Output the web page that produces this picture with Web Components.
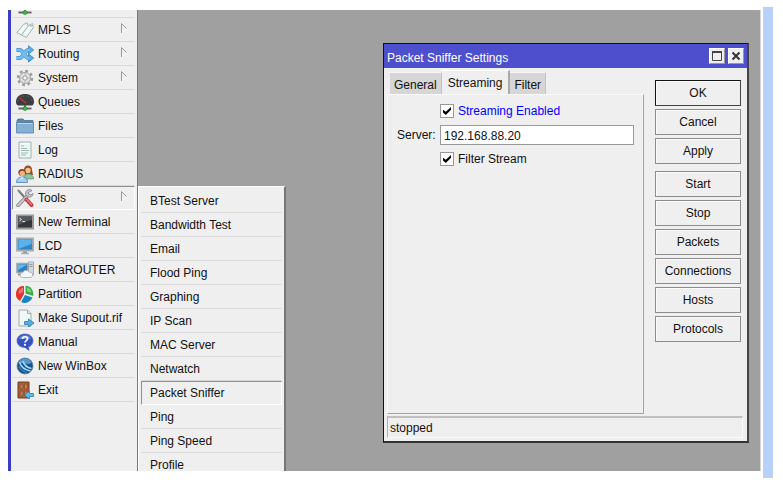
<!DOCTYPE html>
<html lang="en">
<head>
<meta charset="utf-8">
<meta name="viewport" content="width=device-width, initial-scale=1">
<title>WinBox</title>
<style>
  body {
    margin: 0;
    background: #fff;
    color: #111;
    font: 12px/16px "Liberation Sans", Arial, sans-serif;
  }
</style>
</head>
<body>
<wb-page>
  <wb-sidebar>
    <wb-item icon="queues"></wb-item>
    <wb-item icon="mpls" arrow>MPLS</wb-item>
    <wb-item icon="routing" arrow>Routing</wb-item>
    <wb-item icon="system" arrow>System</wb-item>
    <wb-item icon="queues">Queues</wb-item>
    <wb-item icon="files">Files</wb-item>
    <wb-item icon="log">Log</wb-item>
    <wb-item icon="radius">RADIUS</wb-item>
    <wb-item icon="tools" arrow selected>Tools
      <wb-submenu slot="submenu">
        <wb-item>BTest Server</wb-item>
        <wb-item>Bandwidth Test</wb-item>
        <wb-item>Email</wb-item>
        <wb-item>Flood Ping</wb-item>
        <wb-item>Graphing</wb-item>
        <wb-item>IP Scan</wb-item>
        <wb-item>MAC Server</wb-item>
        <wb-item>Netwatch</wb-item>
        <wb-item selected>Packet Sniffer</wb-item>
        <wb-item>Ping</wb-item>
        <wb-item>Ping Speed</wb-item>
        <wb-item>Profile</wb-item>
      </wb-submenu>
    </wb-item>
    <wb-item icon="terminal">New Terminal</wb-item>
    <wb-item icon="lcd">LCD</wb-item>
    <wb-item icon="metarouter">MetaROUTER</wb-item>
    <wb-item icon="partition">Partition</wb-item>
    <wb-item icon="supout">Make Supout.rif</wb-item>
    <wb-item icon="manual">Manual</wb-item>
    <wb-item icon="winbox">New WinBox</wb-item>
    <wb-item icon="exit">Exit</wb-item>
  </wb-sidebar>

  <wb-window slot="window" heading="Packet Sniffer Settings" status="stopped">
    <wb-tabs tabs="General,Streaming,Filter" active="Streaming">
      <sniffer-form></sniffer-form>
    </wb-tabs>
    <wb-button slot="actions" primary>OK</wb-button>
    <wb-button slot="actions">Cancel</wb-button>
    <wb-button slot="actions">Apply</wb-button>
    <wb-button slot="actions" group>Start</wb-button>
    <wb-button slot="actions">Stop</wb-button>
    <wb-button slot="actions">Packets</wb-button>
    <wb-button slot="actions">Connections</wb-button>
    <wb-button slot="actions">Hosts</wb-button>
    <wb-button slot="actions">Protocols</wb-button>
  </wb-window>
</wb-page>

<script>
// Sidebar icons, all on an 18x18 grid
const ICONS = {
  mpls: `
    <g fill="#f1f8f6" stroke="#9db5b3" stroke-linejoin="round">
      <path d="M.8 11.500 7.500 3.500l3.700-1.700 1 3.700-6.700 8.500z"/>
      <path d="M5.500 14 12.500 4.500l4-2 .7 4L10.500 16.500z"/>
      <circle cx="14.800" cy="5" r=".6"/>
    </g>`,
  routing: `
    <g fill="none" stroke="#3f8fd0" stroke-width="4">
      <path d="M.5 5h3c4 0 5 8 9 8h1"/><path d="M.5 13h3c4 0 5-8 9-8h1"/>
    </g>
    <path d="M12.500.8 17.700 5l-5.200 4zM12.500 9l5.200 4-5.200 4z" fill="#5badea" stroke="#3f8fd0"/>
    <g fill="none" stroke="#74bff2" stroke-width="2.500">
      <path d="M.5 5h3c4 0 5 8 9 8h1"/><path d="M.5 13h3c4 0 5-8 9-8h1"/>
    </g>`,
  system: `
    <circle cx="9" cy="9" r="7" fill="none" stroke="#9a9a9a" stroke-width="2.400" stroke-dasharray="2.750 2.750"/>
    <circle cx="9" cy="9" r="5.500" fill="#e2e2e2" stroke="#a2a2a2"/>
    <circle cx="9" cy="9" r="2.200" fill="#f3f3f3" stroke="#969696"/>
    <path d="M9 4v2M9 12v2M4 9h2M12 9h2" stroke="#b8b8b8"/>`,
  queues: `
    <path d="M0 9C0 3.500 4 1 9 1s9 2.500 9 8c0 1.500-.8 3-2 3.500H2C.8 12 0 10.500 0 9z" fill="#3b3d40"/>
    <path d="M2 8c.5-3.500 3.500-5 7-5s6.500 1.500 7 5" fill="none" stroke="#707377" stroke-dasharray="1 1.500"/>
    <path d="m4 5 6 5" stroke="#b93834" stroke-width="1.500"/>
    <path d="M9 12v3M2.500 15.500h13" stroke="#666" stroke-width="2"/>
    <circle cx="9" cy="15.500" r="2" fill="#31c53c" stroke="#177f22" stroke-width=".6"/>`,
  files: `
    <path d="M1 3.500 2 2h5l1.500 1.500H17V9H1z" fill="#5d88ac" stroke="#4a7295" stroke-width=".8"/>
    <path d="M.5 5.500h17V16H.5z" fill="#85b0d3" stroke="#5480a4" stroke-width=".8"/>
    <path d="M1.500 6.500h15" stroke="#b5d3ea"/>`,
  log: `
    <path d="M3 1h12v16H3z" fill="#edf5f3" stroke="#9ab3b1"/>
    <path d="M5 5h3M5 7.500h6M5 9.500h8M5 12h7M5 14h5" stroke="#9dbdbc"/>
    <path d="M4 2.500h10" stroke="#fff"/>`,
  radius: `
    <path d="M8 10V5c0-3 1.500-4.500 4-4.500S16 2 16 5l1 5z" fill="#944e22"/>
    <circle cx="12" cy="5.500" r="2.700" fill="#f2c08c"/>
    <path d="M7.500 14c0-4 2-5 4.500-5s5.500 1 5.500 5z" fill="#8cc4a4" stroke="#5f9a7a" stroke-width=".7"/>
    <circle cx="6" cy="7.500" r="3.600" fill="#8c3c22"/>
    <circle cx="6.300" cy="8.500" r="2.700" fill="#f0b47c"/>
    <path d="M.5 17.500c0-4 2.500-5.500 5.500-5.500s5.500 1.500 5.500 5.500z" fill="#a5cdf5" stroke="#4980bd" stroke-width=".8"/>
    <path d="m4.500 12.500 1.500 2 1.500-2z" fill="#fff"/>`,
  tools: `
    <path d="m2 1 8 9" stroke="#777" stroke-width="2"/>
    <path d="m1 .5 3 1 1.500 3z" fill="#999"/>
    <path d="M2 16.500 12 6" stroke="#7b7d80" stroke-width="3.500" stroke-linecap="round"/>
    <path d="M2 16.500 12 6" stroke="#c9cbcd" stroke-width="2" stroke-linecap="round"/>
    <path d="M16 1.500a3.800 3.800 0 1 0 1.200 3L14 6l-2.200-2z" fill="#c6c8ca" stroke="#808386" stroke-width=".8"/>
    <path d="m10.500 10.500 5 5.500" stroke="#c23a3a" stroke-width="4" stroke-linecap="round"/>
    <path d="m10.500 10 5 5.500" stroke="#f07b78" stroke-width="1.500" stroke-linecap="round"/>`,
  terminal: `
    <path d="M1 2.500h16v13H1z" fill="#343639" stroke="#98999b" stroke-width="2"/>
    <path d="M2 3.500h14v3L2 12z" fill="#55585c"/>
    <path d="m3.500 5 2 1.500-2 1.500M6.500 8.500H9" fill="none" stroke="#e8e8e8"/>`,
  lcd: `
    <path d="M1 1.500h16v12H1z" fill="#2e86c6" stroke="#a5abb0" stroke-width="1.800"/>
    <path d="M2.500 3h13v4l-13 5z" fill="#5cb1e8"/>
    <path d="M7 14.500h4v2H7z" fill="#8d9296"/><path d="M5 16.500h8" stroke="#a9adb0" stroke-width="1.500"/>`,
  metarouter: `
    <path d="M1 2.500h11v9H1z" fill="#2f80c0" stroke="#a0a6ab" stroke-width="1.600"/>
    <path d="M2 3.500h9L2 9z" fill="#69b7e9"/>
    <path d="M12.500 1h5v13h-5z" fill="#d5d8da" stroke="#989da1" stroke-width=".8"/>
    <path d="M13.500 3.500h3M13.500 5.500h3" stroke="#909599"/>
    <path d="M2 13.500h4" stroke="#898f93" stroke-width="2"/>
    <path d="M6.500 16.500a2.500 2.500 0 0 1 .3-5 3.500 3.500 0 0 1 6.500-.3 2.800 2.800 0 0 1 1.700 5.300z" fill="#f5f8fa" stroke="#9ba9b4" stroke-width=".8"/>`,
  partition: `
    <path d="M8 1A8 8 0 0 0 4 16l4-7z" fill="#e1352f"/>
    <path d="M9.500.8A8 8 0 0 1 17 11L9.500 8.500z" fill="#3dad4a"/>
    <path d="M9 10 16.500 12.500A8 8 0 0 1 5.200 17z" fill="#1784c5"/>
    <path d="M7 2.500A6.500 6.500 0 0 0 2.500 9L7 7z" fill="#f2736c"/>
    <path d="M11 2.500a6 6 0 0 1 4.500 5L11 6.500z" fill="#7cd277"/>`,
  supout: `
    <path d="M3 1h8.500L15 4.500V17H3z" fill="#f0f7f5" stroke="#98afad"/>
    <path d="M11.500 1v3.500H15" fill="#d9e5e3" stroke="#98afad"/>
    <path d="M8.500 12.500h4V10l5.500 4-5.500 4v-2.500h-4z" fill="#4eafe4" stroke="#287eb0" stroke-width=".8"/>`,
  manual: `
    <path d="M9 1c4.500 0 8 2.800 8 6.800 0 3-1.800 5.200-4.500 6.200l.5 3.500-4-3C4.500 14.500 1 12 1 7.800S4.500 1 9 1z" fill="#3552c2" stroke="#5269b9" stroke-width=".7"/>
    <path d="M3 6c1-2.500 3-3.700 6-3.700S14 3.500 15 6z" fill="#6d8ae3"/>
    <path d="M6.500 6c.2-3 5-3 5 0 0 1.700-2.500 1.600-2.500 3.500" fill="none" stroke="#fff" stroke-width="1.700"/>
    <circle cx="9" cy="11.800" r="1.100" fill="#fff"/>`,
  winbox: `
    <circle cx="9" cy="9" r="8" fill="#17548d" stroke="#6d8799" stroke-width=".8"/>
    <path d="M2.500 6a7 7 0 0 1 13 0L13 7z" fill="#5798cc"/>
    <path d="M3.500 5c1.500 5 5 8 11 9M7 4c1 4 3.500 6.500 8.500 7.500" fill="none" stroke="#a9d7f4" stroke-width="1.500"/>
    <path d="M3 9c1.500 3.500 4 5.500 7.500 6.500" fill="none" stroke="#3e88c2" stroke-width="1.200"/>`,
  exit: `
    <path d="M2 1h11v16H2z" fill="#a9623b" stroke="#71391d"/>
    <path d="M4 3h3v5H4zM8.500 3h3v5h-3zM4 10h3v5H4zM8.500 10h3v5h-3z" fill="#bd7850" stroke="#8a4c2a" stroke-width=".7"/>
    <path d="M17.500 12.500h-4V10L8.500 14l5 4v-2.500h4z" fill="#61bbeb" stroke="#287eb0" stroke-width=".8"/>`
};

/** White page holding the desktop and the scroll strip beside it */
class WbPage extends HTMLElement {
  constructor() {
    super();
    this.attachShadow({ mode: 'open' }).innerHTML = `
      <style>
        :host {
          display: flex;
          gap: 2px;
          box-sizing: border-box;
          height: 100vh;
          padding: 7px 10px 13px 8px;
        }
        .desktop {
          position: relative;
          flex: 1;
          display: flex;
          overflow: hidden;
          box-sizing: border-box;
          margin: 3px 0 7px;
          background: #a0a0a0;
          border-right: 1px solid #d4d4d4;
        }
        .strip {
          width: 10px;
          background: #b8d1fb;
        }
      </style>
      <main class="desktop">
        <slot></slot>
        <slot name="window"></slot>
      </main>
      <div class="strip"></div>
    `;
  }
}

/** Main menu on the left edge; its list is scrolled by part of a row */
class WbSidebar extends HTMLElement {
  constructor() {
    super();
    this.attachShadow({ mode: 'open' }).innerHTML = `
      <style>
        :host {
          display: block;
          box-sizing: border-box;
          width: 130px;
          background: #efefef;
          border-left: 3px solid #3b3dc6;
          border-right: 1px solid #777;
        }
        nav {
          margin-top: -16px;
          padding: 0 2px 0 1px;
        }
      </style>
      <nav><slot></slot></nav>
    `;
  }
}

/** One menu row: optional icon, label, optional arrow and submenu */
class WbItem extends HTMLElement {
  connectedCallback() {
    if (this.shadowRoot) return;
    const icon = this.getAttribute('icon');
    this.attachShadow({ mode: 'open' }).innerHTML = `
      <style>
        :host {
          display: block;
          position: relative;
        }
        button {
          display: flex;
          align-items: center;
          gap: 4px;
          box-sizing: border-box;
          width: 100%;
          height: 24px;
          padding: 0 8px;
          border: 1px solid transparent;
          border-bottom-color: #d9d9d9;
          background: none;
          color: inherit;
          font: inherit;
          text-align: left;
          white-space: nowrap;
        }
        button.with-icon {
          padding: 0 6px 0 3px;
        }
        :host([selected]) button {
          border-color: #909090 #fff #fff #909090;
        }
        .icon {
          flex: none;
        }
        .label {
          flex: 1;
        }
        .arrow {
          align-self: flex-start;
          margin-top: 3px;
        }
      </style>
      <button type="button" class="${icon ? 'with-icon' : ''}">
        ${icon ? `<svg class="icon" width="18" height="18" viewBox="0 0 18 18" fill="none">${ICONS[icon]}</svg>` : ''}
        <span class="label"><slot></slot></span>
        ${this.hasAttribute('arrow') ? `
          <svg class="arrow" width="8" height="12" viewBox="0 0 8 12" fill="none">
            <path d="M1.500 10.500 7 6.500" stroke="#fff"/>
            <path d="M1.500 11V1.500l5 5" stroke="#999"/>
          </svg>` : ''}
      </button>
      <slot name="submenu"></slot>
    `;
  }
}

/** Flyout list that opens beside its parent row */
class WbSubmenu extends HTMLElement {
  constructor() {
    super();
    this.attachShadow({ mode: 'open' }).innerHTML = `
      <style>
        :host {
          position: absolute;
          z-index: 1;
          top: 0;
          left: calc(100% + 3px);
          box-sizing: border-box;
          width: 148px;
          padding: 2px;
          background: #efefef;
          border: 1px solid #fff;
          border-right: 2px solid #777;
        }
      </style>
      <slot></slot>
    `;
  }
}

/** Framed window with title bar, content, action column and status line */
class WbWindow extends HTMLElement {
  connectedCallback() {
    if (this.shadowRoot) return;
    this.attachShadow({ mode: 'open' }).innerHTML = `
      <style>
        :host {
          position: absolute;
          inset: 33px 11px 28px 375px;
          display: flex;
          flex-direction: column;
          box-sizing: border-box;
          background: #efefef;
          border: 1px solid #111;
          border-right: 2px solid #444;
          border-bottom: 2px solid #333;
        }
        header {
          display: flex;
          align-items: center;
          gap: 3px;
          height: 24px;
          padding: 0 3px;
          background: #4d4fcd;
          color: #fff;
        }
        h1 {
          flex: 1;
          margin: 0;
          padding-top: 4px;
          font: inherit;
        }
        header button {
          display: grid;
          place-items: center;
          width: 16px;
          height: 16px;
          padding: 0;
          border: 1px solid #fff;
          border-color: #fff #999 #999 #fff;
          background: #efefef;
        }
        .body {
          flex: 1;
          display: flex;
          gap: 11px;
          padding: 2px 6px 0 3px;
        }
        .content {
          flex: 1;
          display: flex;
        }
        .actions {
          display: flex;
          flex-direction: column;
          gap: 3px;
          width: 86px;
          padding-top: 10px;
        }
        footer {
          margin: 2px 4px 3px 3px;
          padding: 2px 2px 1px;
          border: 1px solid #fafafa;
          border-top: 2px solid #c0c0c0;
          border-left-color: #b0b0b0;
        }
      </style>
      <header>
        <h1>${this.getAttribute('heading')}</h1>
        <button type="button" aria-label="Maximize">
          <svg width="10" height="10" viewBox="0 0 10 10" fill="none">
            <path d="M.5 1.500h9v8h-9z" stroke="#444"/><path d="M0 1h10" stroke="#444" stroke-width="2"/>
          </svg>
        </button>
        <button type="button" aria-label="Close">
          <svg width="10" height="10" viewBox="0 0 10 10" fill="none">
            <path d="m1.500 1.500 7 7m0-7-7 7" stroke="#333" stroke-width="2"/>
          </svg>
        </button>
      </header>
      <div class="body">
        <div class="content"><slot></slot></div>
        <div class="actions"><slot name="actions"></slot></div>
      </div>
      <footer>${this.getAttribute('status')}</footer>
    `;
  }
}

class WbTabs extends HTMLElement {
  connectedCallback() {
    if (this.shadowRoot) return;
    const active = this.getAttribute('active');
    const tabs = this.getAttribute('tabs').split(',');
    this.attachShadow({ mode: 'open' }).innerHTML = `
      <style>
        :host {
          flex: 1;
          display: flex;
          flex-direction: column;
        }
        .tabs {
          display: flex;
          align-items: flex-end;
          padding-left: 3px;
        }
        button {
          height: 22px;
          padding: 2px 4px 0;
          border: 0;
          border-top: 1px solid #f8f8f8;
          border-right: 1px solid #c4c4c4;
          background: #d6d6d6;
          color: inherit;
          font: inherit;
        }
        button[aria-selected="true"] {
          height: 25px;
          margin-bottom: -1px;
          padding: 0 6px 1px;
          border-top-color: #fff;
          border-right: 2px solid #aaa;
          background: #efefef;
        }
        .panel {
          flex: 1;
          border: 1px solid #fafafa;
          border-right: 1px solid #a4a4a4;
          border-bottom: 1px solid #a4a4a4;
        }
      </style>
      <div class="tabs" role="tablist">
        ${tabs.map(t => `<button type="button" role="tab" aria-selected="${t === active}">${t}</button>`).join('')}
      </div>
      <div class="panel" role="tabpanel"><slot></slot></div>
    `;
  }
}

/** Fields of the Streaming tab */
class SnifferForm extends HTMLElement {
  constructor() {
    super();
    this.attachShadow({ mode: 'open' }).innerHTML = `
      <style>
        :host {
          display: block;
          padding: 4px 9px 0 9px;
        }
        form {
          display: grid;
          grid-template-columns: 40px 1fr;
          column-gap: 3px;
          row-gap: 2px;
          align-items: center;
        }
        .check {
          grid-column: 2;
          display: flex;
          align-items: center;
          gap: 4px;
          height: 24px;
        }
        .changed {
          color: #00f;
        }
        input[type="checkbox"] {
          appearance: none;
          display: grid;
          place-items: center;
          box-sizing: border-box;
          width: 14px;
          height: 14px;
          margin: 0;
          border: 1px solid #999;
          background: #fff;
        }
        input[type="checkbox"]:checked::before {
          content: "";
          width: 8px;
          height: 8px;
          background: #000;
          clip-path: polygon(0 35%, 35% 60%, 100% 0, 100% 35%, 35% 100%, 0 70%);
        }
        input[type="text"] {
          box-sizing: border-box;
          width: 100%;
          height: 20px;
          min-width: 0;
          padding: 1px 3px 0;
          border: 1px solid #999;
          background: #fff;
          color: inherit;
          font: inherit;
        }
      </style>
      <form>
        <div class="check">
          <input type="checkbox" id="streaming" checked>
          <label class="changed" for="streaming">Streaming Enabled</label>
        </div>
        <label for="server">Server:</label>
        <input type="text" id="server" value="192.168.88.20">
        <div class="check">
          <input type="checkbox" id="filter" checked>
          <label for="filter">Filter Stream</label>
        </div>
      </form>
    `;
  }
}

class WbButton extends HTMLElement {
  constructor() {
    super();
    this.attachShadow({ mode: 'open' }).innerHTML = `
      <style>
        :host {
          display: block;
        }
        :host([group]) {
          margin-top: 4px;
        }
        button {
          box-sizing: border-box;
          width: 100%;
          height: 26px;
          padding: 0;
          border: 1px solid #8c8c8c;
          background: #efefef;
          box-shadow: inset 1px 1px #fbfbfb;
          color: inherit;
          font: inherit;
        }
        :host([primary]) button {
          border-color: #111 #444 #444 #111;
        }
      </style>
      <button type="button"><slot></slot></button>
    `;
  }
}

customElements.define('wb-page', WbPage);
customElements.define('wb-sidebar', WbSidebar);
customElements.define('wb-item', WbItem);
customElements.define('wb-submenu', WbSubmenu);
customElements.define('wb-window', WbWindow);
customElements.define('wb-tabs', WbTabs);
customElements.define('sniffer-form', SnifferForm);
customElements.define('wb-button', WbButton);
</script>
</body>
</html>
